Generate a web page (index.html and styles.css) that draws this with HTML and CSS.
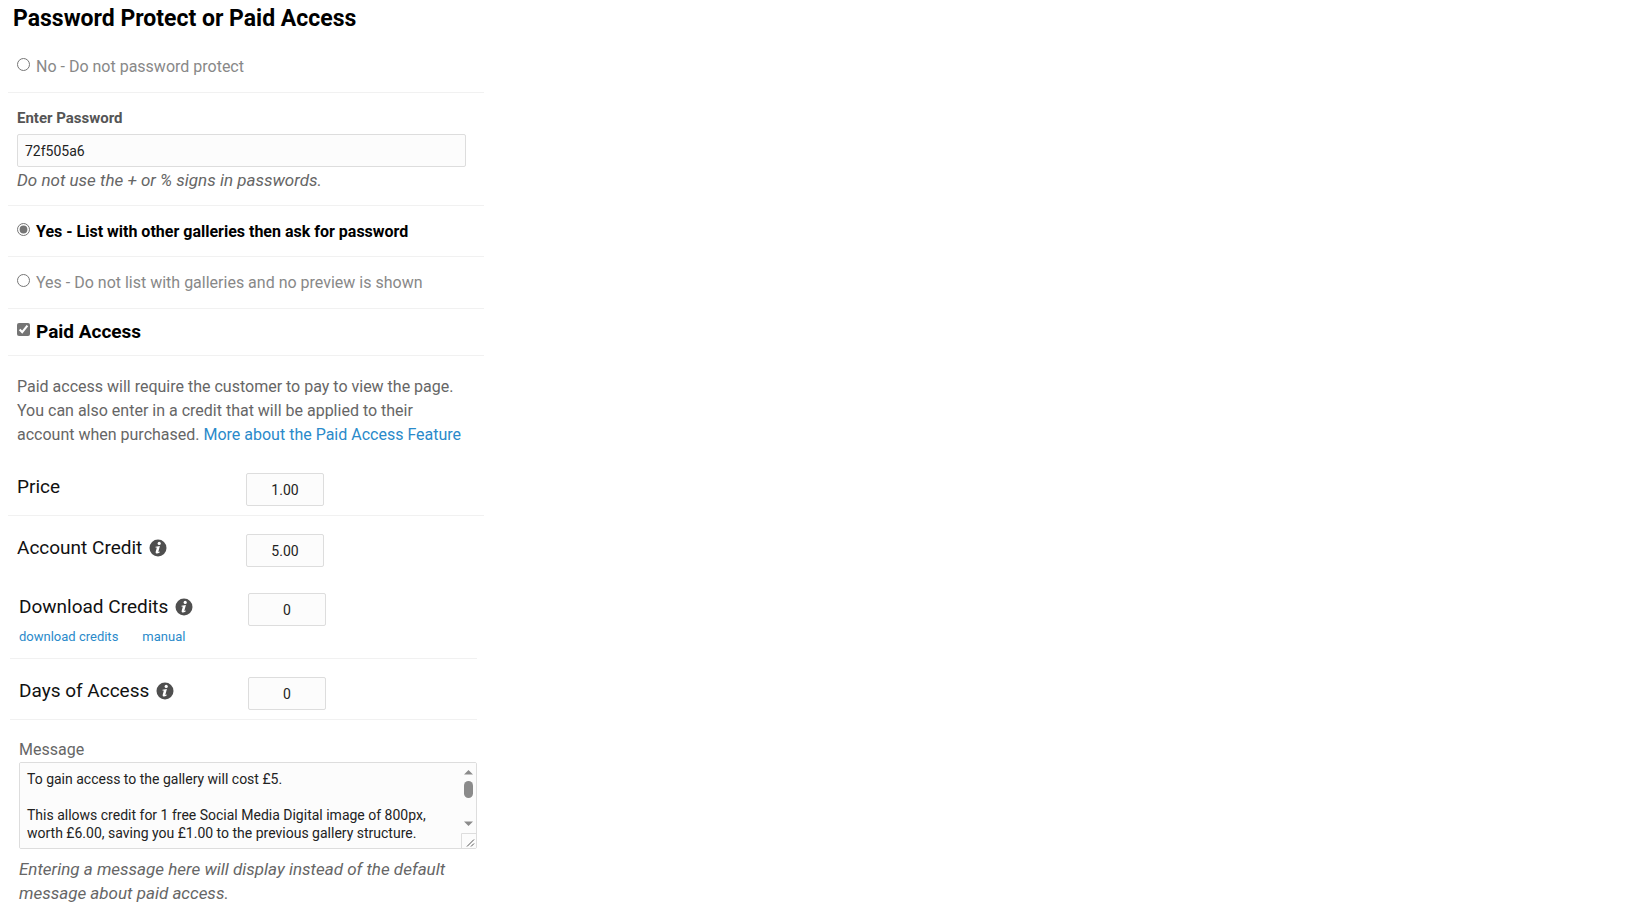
FILE: index.html
```html
<!DOCTYPE html>
<html lang="en">
<head>
<meta charset="utf-8">
<title>Password Protect or Paid Access</title>
<link rel="stylesheet" href="styles.css">
</head>
<body>
<svg class="sprite" aria-hidden="true">
  <symbol id="info" viewBox="0 0 18 18">
    <circle cx="9" cy="9" r="8.5" fill="#4f4f4f"/>
    <circle cx="10.2" cy="4.4" r="1.6" fill="#fff"/>
    <path d="M6.5 7.7 L10.9 6.9 L9.4 12.6 Q9.3 13.3 10.9 12.5 L10.6 13.4 Q8.9 14.7 7.5 14.5 Q6.3 14.2 6.7 12.7 L7.8 8.7 Q7.8 8.3 6.4 8.5 Z" fill="#fff"/>
  </symbol>
</svg>
<form class="panel">
  <h1 class="title">Password Protect or Paid Access</h1>

  <div class="row option option-first">
    <input class="tick" type="radio" name="protect" id="protect-no">
    <label for="protect-no">No - Do not password protect</label>
  </div>

  <div class="row password">
    <label class="password-label" for="password">Enter Password</label>
    <input class="field" type="text" id="password" value="72f505a6">
    <p class="hint">Do not use the + or % signs in passwords.</p>
  </div>

  <div class="row option option-selected">
    <input class="tick" type="radio" name="protect" id="protect-list" checked>
    <label for="protect-list">Yes - List with other galleries then ask for password</label>
  </div>

  <div class="row option">
    <input class="tick" type="radio" name="protect" id="protect-hidden">
    <label for="protect-hidden">Yes - Do not list with galleries and no preview is shown</label>
  </div>

  <div class="row option paid">
    <input class="tick" type="checkbox" id="paid" checked>
    <label for="paid">Paid Access</label>
  </div>

  <p class="about">Paid access will require the customer to pay to view the page. You can also enter in a credit that will be applied to their account when purchased. <a href="#">More about the Paid Access Feature</a></p>

  <div class="row setting price">
    <label class="name" for="price">Price</label>
    <input class="field amount" type="text" id="price" value="1.00">
  </div>

  <div class="setting credit">
    <div class="name"><label for="credit">Account Credit</label><svg class="info"><use href="#info"/></svg></div>
    <input class="field amount" type="text" id="credit" value="5.00">
  </div>

  <div class="inner">
    <div class="row setting downloads">
      <div>
        <div class="name"><label for="downloads">Download Credits</label><svg class="info"><use href="#info"/></svg></div>
        <div class="links"><a href="#">download credits</a><a href="#">manual</a></div>
      </div>
      <input class="field amount" type="text" id="downloads" value="0">
    </div>

    <div class="row setting days">
      <div class="name"><label for="days">Days of Access</label><svg class="info"><use href="#info"/></svg></div>
      <input class="field amount" type="text" id="days" value="0">
    </div>

    <div class="message">
      <label for="message">Message</label>
      <div class="message-box">
        <textarea class="field message-text" id="message">To gain access to the gallery will cost £5.

This allows credit for 1 free Social Media Digital image of 800px, worth £6.00, saving you £1.00 to the previous gallery structure.</textarea>
        <svg class="scrollbar" viewBox="0 0 15 85" aria-hidden="true">
          <path d="M3 11.500 L7.500 7 L12 11.500 Z M3 58.500 L7.500 63 L12 58.500 Z" fill="#8b8b8b"/>
          <rect x="3" y="18" width="9" height="17" rx="4.500" fill="#8b8b8b"/>
          <path d="M0.500 85 V70.500 H15" fill="none" stroke="#ddd"/>
          <path d="M6 83.500 L13 76.500 M10 83.500 L13 80.500" fill="none" stroke="#555"/>
        </svg>
      </div>
      <p class="hint">Entering a message here will display instead of the default message about paid access.</p>
    </div>
  </div>
</form>
</body>
</html>
```
FILE: styles.css
```css
* {
  box-sizing: border-box;
}

body {
  margin: 0;
  background: #fff;
  color: #666;
  font: 16px/24px Roboto, sans-serif;
}

.sprite {
  position: absolute;
  width: 0;
  height: 0;
}

.panel {
  max-width: 484px;
  padding-left: 8px;
}

.title {
  margin: 0;
  padding: 5px 5px 0;
  color: #000;
  font-size: 23px;
  line-height: 28px;
  font-weight: 700;
}

a {
  color: #2a8aca;
  text-decoration: none;
}

.row {
  border-bottom: 1px solid #f1f1f1;
}

.option {
  display: flex;
  align-items: flex-start;
  gap: 6px;
  padding: 14px 9px 13px;
  color: #888;
}

.option-first {
  padding-top: 22px;
}

.option-selected,
.paid {
  color: #000;
  font-weight: 700;
}

.option-selected {
  padding-bottom: 12px;
}

.tick {
  width: 13px;
  height: 13px;
  margin: 3px 0 0;
  accent-color: #757575;
}

.paid {
  padding: 11px 9px;
  font-size: 19px;
}

.password {
  padding: 15px 9px 13px;
}

.password-label {
  display: block;
  margin-bottom: 6px;
  color: #555;
  font-size: 15px;
  line-height: 20px;
  font-weight: 700;
}

.field {
  display: block;
  width: 100%;
  height: 33px;
  padding: 7px;
  border: 1px solid #ddd;
  border-radius: 2px;
  background: #fcfcfc;
  color: #222;
  font: 14px/18px Roboto, sans-serif;
}

.password .field {
  width: calc(100% - 9px);
}

.hint {
  margin: 0;
  padding-top: 1px;
  font-size: 17px;
  font-style: italic;
}

.about {
  margin: 0;
  padding: 19px 13px 26px 9px;
}

.setting {
  display: grid;
  grid-template-columns: 229px 78px;
  align-items: start;
  padding: 0 9px;
}

.name {
  display: flex;
  align-items: center;
  gap: 7px;
  padding-top: 2px;
  color: #111;
  font-size: 19px;
}

.field.amount {
  width: 78px;
  text-align: center;
}

.info {
  width: 18px;
  height: 18px;
}

.price {
  padding-bottom: 9px;
}

.credit {
  padding-top: 18px;
}

.inner {
  padding: 26px 7px 0 2px;
}

.downloads {
  padding-bottom: 10px;
}

.links {
  display: flex;
  gap: 24px;
  padding-top: 7px;
  font-size: 13px;
  line-height: 22px;
}

.days {
  padding-top: 18px;
  padding-bottom: 9px;
}

.message {
  padding: 18px 0 0 9px;
}

.message-box {
  position: relative;
  margin-bottom: 7px;
}

.message-text {
  height: 87px;
  padding-right: 22px;
  resize: none;
  scrollbar-width: none;
}

.scrollbar {
  position: absolute;
  top: 1px;
  right: 1px;
  width: 15px;
  height: 85px;
}
```
